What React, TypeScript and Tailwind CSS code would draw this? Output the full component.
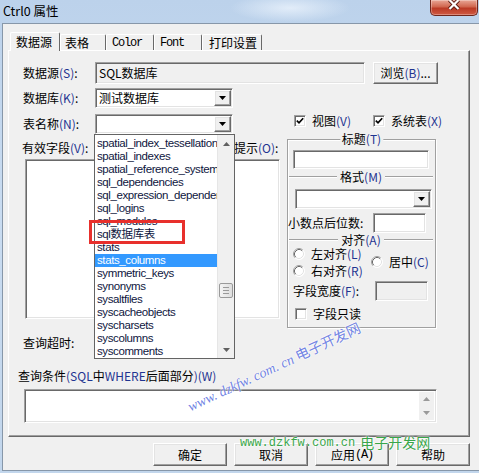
import type { ReactNode } from 'react';

const sunken =
  'border border-t-[#a0a0a0] border-l-[#a0a0a0] border-r-white border-b-white shadow-[inset_1px_1px_0_#696969,inset_-1px_-1px_0_#e3e3e3]';
const raised =
  'border border-t-white border-l-white border-r-[#696969] border-b-[#696969] shadow-[inset_-1px_-1px_0_#a0a0a0,inset_1px_1px_0_#e3e3e3]';

const tables = [
  'spatial_index_tessellations',
  'spatial_indexes',
  'spatial_reference_systems',
  'sql_dependencies',
  'sql_expression_dependencies',
  'sql_logins',
  'sql_modules',
  'sql数据库表',
  'stats',
  'stats_columns',
  'symmetric_keys',
  'synonyms',
  'sysaltfiles',
  'syscacheobjects',
  'syscharsets',
  'syscolumns',
  'syscomments',
];

// mnemonic letters, a bit blue like the cleartype fringe in the shot
function M({ children }: { children: ReactNode }) {
  return <span className="text-[#1f3490]">{children}</span>;
}

function Tri({ up, color = '#000' }: { up?: boolean; color?: string }) {
  return (
    <svg width="7" height="4" viewBox="0 0 7 4">
      <path d={up ? 'M0 4h7L3.5 0z' : 'M0 0h7L3.5 4z'} fill={color} />
    </svg>
  );
}

function Combo({ className, children }: { className: string; children?: ReactNode }) {
  return (
    <div className={`flex h-[20px] bg-white p-[1px] ${sunken} ${className}`}>
      <div className="flex flex-1 items-center pl-[2px] whitespace-nowrap">{children}</div>
      <div className={`flex w-[17px] items-center justify-center bg-[#f0f0f0] ${raised}`}>
        <Tri />
      </div>
    </div>
  );
}

function Check({ checked }: { checked?: boolean }) {
  return (
    <div className={`flex h-[12px] w-[12px] shrink-0 items-center justify-center bg-white ${sunken}`}>
      {checked && (
        <svg width="8" height="8" viewBox="0 0 8 8">
          <path d="M0.8 3.6 L3 5.8 L7.2 1.2" fill="none" stroke="#000" strokeWidth="1.7" />
        </svg>
      )}
    </div>
  );
}

function Radio() {
  return (
    <svg width="12" height="12" viewBox="0 0 12 12" className="shrink-0">
      <circle cx="6" cy="6" r="5.5" fill="#fff" />
      <path d="M9.89 2.11 A5.5 5.5 0 0 0 2.11 9.89" fill="none" stroke="#a0a0a0" />
      <path d="M9.18 2.82 A4.5 4.5 0 0 0 2.82 9.18" fill="none" stroke="#696969" />
      <path d="M9.89 2.11 A5.5 5.5 0 0 1 2.11 9.89" fill="none" stroke="#ffffff" />
      <path d="M9.18 2.82 A4.5 4.5 0 0 1 2.82 9.18" fill="none" stroke="#e3e3e3" />
    </svg>
  );
}

function Sep({ children }: { children: ReactNode }) {
  return (
    <div className="flex items-center">
      <div className="h-[2px] flex-1 border-t border-b border-t-[#a0a0a0] border-b-white" />
      <span className="px-[3px]">{children}</span>
      <div className="h-[2px] flex-1 border-t border-b border-t-[#a0a0a0] border-b-white" />
    </div>
  );
}

function Btn({ children }: { children: ReactNode }) {
  return <div className={`flex h-[23px] w-[74px] items-center justify-center bg-[#f0f0f0] ${raised}`}>{children}</div>;
}

function GroupBox() {
  return (
    <div className="relative mt-[12px] flex h-[189px] w-[149px] flex-col border border-[#a0a0a0] shadow-[inset_1px_1px_0_#fff,1px_1px_0_#fff]">
      <span className="absolute -top-[8px] left-1/2 -translate-x-1/2 bg-[#f0f0f0] px-[2px] leading-[14px] whitespace-nowrap">
        标题<M>(T)</M>
      </span>
      <div className={`ml-[5px] mt-[10px] h-[19px] w-[136px] bg-white ${sunken}`} />
      <div className="ml-[1px] mr-[2px] mt-[2px] h-[14px]">
        <Sep>
          格式<M>(M)</M>
        </Sep>
      </div>
      <Combo className="ml-[7px] mt-[4px] w-[137px]" />
      <div className="mt-[4px] flex h-[20px] items-center">
        <span className="w-[85px] whitespace-nowrap">小数点后位数:</span>
        <div className={`h-[20px] w-[53px] bg-white ${sunken}`} />
      </div>
      <div className="ml-[1px] mr-[2px] mt-[1px] h-[12px]">
        <Sep>
          对齐<M>(A)</M>
        </Sep>
      </div>
      <div className="flex h-[32px] items-center">
        <div className="ml-[5px] flex w-[78px] flex-col">
          <div className="flex h-[16px] items-center gap-[6px]">
            <Radio />
            <span className="whitespace-nowrap">
              左对齐<M>(L)</M>
            </span>
          </div>
          <div className="flex h-[16px] items-center gap-[6px] pt-[1px]">
            <Radio />
            <span className="whitespace-nowrap">
              右对齐<M>(R)</M>
            </span>
          </div>
        </div>
        <div className="flex items-center gap-[6px]">
          <Radio />
          <span className="whitespace-nowrap">
            居中<M>(C)</M>
          </span>
        </div>
      </div>
      <div className="mt-[3px] flex h-[20px] items-center">
        <span className="ml-[5px] w-[82px] whitespace-nowrap">
          字段宽度<M>(F)</M>:
        </span>
        <div className={`h-[20px] w-[53px] bg-[#f0f0f0] ${sunken}`} />
      </div>
      <div className="mt-[5px] flex h-[16px] items-center gap-[6px] pl-[7px]">
        <Check />
        <span>字段只读</span>
      </div>
    </div>
  );
}

function DropList() {
  return (
    <div className="absolute left-[94px] top-[134px] flex h-[225px] w-[141px] border border-[#646464] bg-white [font-family:'Liberation_Sans','Noto_Sans_CJK_SC',sans-serif]">
      <div className="flex w-[122px] flex-col overflow-hidden pt-[2px] text-[11.5px] tracking-[-0.4px] text-[#0e1640]">
        {tables.map((t) => (
          <div
            key={t}
            className={`flex h-[13px] shrink-0 items-center pl-[2px] whitespace-nowrap ${t === 'stats_columns' ? 'bg-[#3399ff] text-white' : ''}`}
          >
            {t}
          </div>
        ))}
      </div>
      <div className="flex w-[17px] flex-col border-l border-[#e6e6e6] bg-[#f0f0f0]">
        <div className="flex h-[17px] items-center justify-center">
          <Tri up color="#606060" />
        </div>
        <div className="ml-[1px] mt-[131px] flex h-[15px] w-[14px] flex-col items-center justify-center gap-[2px] rounded-[2px] border border-[#9a9a9a] bg-gradient-to-r from-[#f4f4f4] to-[#dedede]">
          <div className="h-[1px] w-[6px] bg-[#9a9a9a]" />
          <div className="h-[1px] w-[6px] bg-[#9a9a9a]" />
          <div className="h-[1px] w-[6px] bg-[#9a9a9a]" />
        </div>
        <div className="flex-1" />
        <div className="flex h-[17px] items-center justify-center">
          <Tri color="#606060" />
        </div>
      </div>
    </div>
  );
}

export default function App() {
  return (
    <div className="relative h-[473px] w-[479px] overflow-hidden bg-[linear-gradient(180deg,#bcd2eb_0%,#c9dcf1_45%,#c2d6ec_100%)] text-[12px] leading-none text-black [font-family:'Noto_Sans_CJK_SC','Noto_Sans',sans-serif]">
      {/* title bar */}
      <div className="flex h-[23px] items-start bg-[radial-gradient(ellipse_60px_14px_at_290px_8px,rgba(235,243,252,0.8),transparent)]">
        <span className="pl-[3px] pt-[3px] text-[12.5px] leading-[16px]">Ctrl0 属性</span>
        <div className="ml-auto mr-[1px] flex h-[16px] w-[48px] justify-center rounded-b-[5px] border border-t-0 border-[#6e261c] bg-[linear-gradient(180deg,#e9a696_0%,#d0664f_45%,#bb3a25_55%,#cf5a43_100%)] shadow-[inset_0_0_0_1px_rgba(255,255,255,0.3)]">
          <svg width="14" height="10" viewBox="0 0 14 10">
            <path d="M2.5 0 L11.5 9 M11.5 0 L2.5 9" stroke="#5a1a12" strokeWidth="4" />
            <path d="M2.5 0 L11.5 9 M11.5 0 L2.5 9" stroke="#fff" strokeWidth="2.2" />
          </svg>
        </div>
      </div>

      {/* client area */}
      <div className="ml-[2px] flex h-[448px] flex-col border-y border-l border-[#8797a9] bg-[#f0f0f0]">
        {/* tabs */}
        <div className="ml-[7px] mt-[8px] flex h-[18px] items-start">
          <div className="relative z-10 flex h-[19px] w-[50px] items-center rounded-t-[2px] border-l border-t border-r border-l-white border-t-white border-r-[#696969] bg-[#f0f0f0] pl-[5px] text-[12px]">
            数据源
          </div>
          <div className="mt-[2px] flex h-[16px] w-[46px] items-center rounded-t-[2px] border-l border-t border-r border-l-white border-t-white border-r-[#696969] pl-[4px]">
            表格
          </div>
          <div className="mt-[2px] flex h-[16px] w-[48px] items-center rounded-t-[2px] border-l border-t border-r border-l-white border-t-white border-r-[#696969] pl-[5px] text-[12px] tracking-[-1.2px] [font-family:'Liberation_Mono',monospace]">
            Color
          </div>
          <div className="mt-[2px] flex h-[16px] w-[48px] items-center rounded-t-[2px] border-l border-t border-r border-l-white border-t-white border-r-[#696969] pl-[5px] text-[12px] tracking-[-1.2px] [font-family:'Liberation_Mono',monospace]">
            Font
          </div>
          <div className="mt-[2px] flex h-[16px] w-[60px] items-center rounded-t-[2px] border-l border-t border-r border-l-white border-t-white border-r-[#696969] pl-[6px]">
            打印设置
          </div>
        </div>

        {/* tab page */}
        <div className="ml-[5px] flex h-[387px] w-[462px] flex-col border border-t-white border-l-white border-r-[#696969] border-b-[#696969] pl-[14px] shadow-[inset_-1px_-1px_0_#a0a0a0]">
          <div className="mt-[11px] flex h-[22px] items-center">
            <span className="w-[72px] whitespace-nowrap">
              数据源<M>(S)</M>:
            </span>
            <div className={`flex h-[22px] w-[270px] items-center bg-[#f0f0f0] pl-[3px] ${sunken}`}>SQL数据库</div>
            <div className={`ml-[8px] flex h-[22px] w-[65px] items-center justify-center bg-[#f0f0f0] ${raised}`}>
              浏览<M>(B)</M>...
            </div>
          </div>
          <div className="mt-[4px] flex h-[20px] items-center">
            <span className="w-[72px] whitespace-nowrap">
              数据库<M>(K)</M>:
            </span>
            <Combo className="w-[138px]">测试数据库</Combo>
          </div>

          <div className="mt-[6px] flex">
            {/* left column */}
            <div className="flex w-[257px] flex-col">
              <div className="flex h-[20px] items-center">
                <span className="w-[72px] whitespace-nowrap">
                  表名称<M>(N)</M>:
                </span>
                <Combo className="w-[138px]" />
              </div>
              <div className="mt-[6px] flex h-[16px] items-center">
                <span className="-ml-[1px] w-[188px] whitespace-nowrap">
                  有效字段<M>(V)</M>:
                </span>
                <span className="whitespace-nowrap">
                  字段提示<M>(O)</M>:
                </span>
              </div>
              <div className="mt-[3px] flex h-[160px]">
                <div className={`ml-[2px] w-[176px] bg-white ${sunken}`} />
                <div className={`ml-[9px] w-[70px] bg-white ${sunken}`} />
              </div>
              <div className="mt-[14px] flex h-[20px] items-center">
                <span className="w-[72px] whitespace-nowrap">查询超时:</span>
                <div className={`h-[20px] w-[80px] bg-white ${sunken}`} />
              </div>
            </div>

            {/* right column */}
            <div className="ml-[7px] flex w-[150px] flex-col">
              <div className="mt-[1px] flex h-[12px] items-center">
                <div className="ml-[7px]">
                  <Check checked />
                </div>
                <span className="ml-[6px] whitespace-nowrap">
                  视图<M>(V)</M>
                </span>
                <div className="ml-[22px]">
                  <Check checked />
                </div>
                <span className="ml-[6px] whitespace-nowrap">
                  系统表<M>(X)</M>
                </span>
              </div>
              <GroupBox />
            </div>
          </div>

          <div className="-ml-[5px] mt-[16px] flex h-[14px] items-center whitespace-nowrap">
            查询条件<M>(SQL</M>中<M>WHERE</M>后面部分<M>)(W)</M>
          </div>
          <div className={`ml-[1px] mt-[6px] flex h-[34px] w-[413px] justify-end bg-white p-[2px] ${sunken}`}>
            <div className="flex w-[15px] flex-col items-center justify-between bg-[#f0f0f0] py-[5px]">
              <Tri up color="#9a9a9a" />
              <Tri color="#9a9a9a" />
            </div>
          </div>
        </div>

        {/* dialog buttons */}
        <div className="mt-[6px] flex gap-[7px] pl-[150px]">
          <Btn>确定</Btn>
          <Btn>取消</Btn>
          <Btn>
            应用<span className="text-[12px] tracking-[-1.2px] [font-family:'Liberation_Mono',monospace]">(A)</span>
          </Btn>
          <Btn>帮助</Btn>
        </div>
      </div>

      <DropList />

      {/* red marker around the new table */}
      <div className="absolute left-[89px] top-[220px] h-[24px] w-[96px] border-[3px] border-[#e8302c]" />

      {/* diagonal watermark */}
      <div className="absolute left-[274px] top-[367px] -translate-x-1/2 -translate-y-1/2 -rotate-[25deg] whitespace-nowrap text-[14px] italic text-[#4c63dc]/80 [font-family:'Liberation_Serif',serif] [text-shadow:0_0_2px_#fff,0_0_2px_#fff]">
        www. dzkfw. com. cn <span className="not-italic [font-family:'Noto_Sans_CJK_SC',sans-serif]">电子开发网</span>
      </div>

      {/* green watermark */}
      <div className="absolute left-[240px] top-[434px] flex items-end whitespace-nowrap text-[#39a64a] [text-shadow:0_0_2px_#fff,0_0_2px_#fff]">
        <span className="text-[12px] leading-[14px] [font-family:'Liberation_Mono',monospace]">www.dzkfw.com.cn</span>
        <span className="ml-[5px] text-[14px] leading-[16px]">电子开发网</span>
      </div>
    </div>
  );
}
